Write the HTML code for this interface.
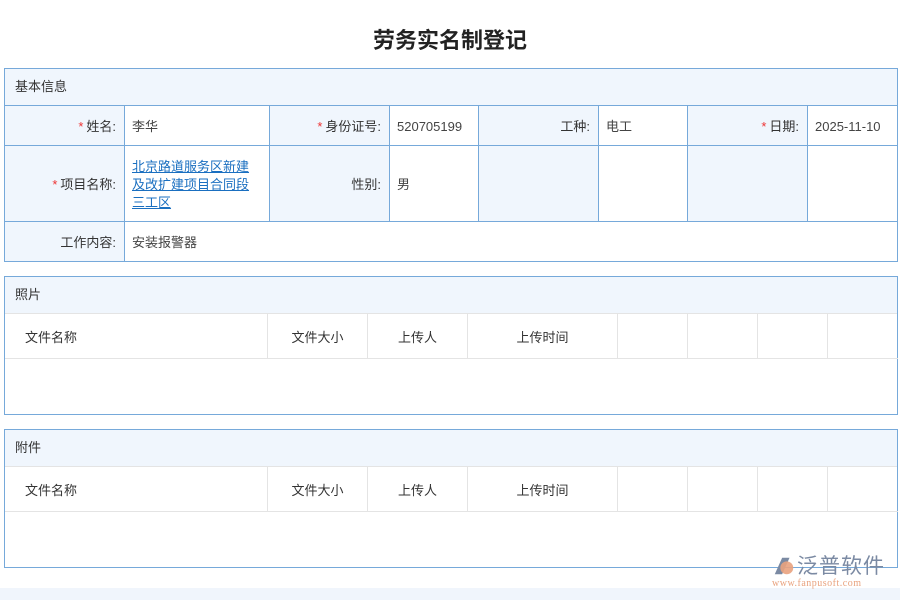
<!DOCTYPE html><html><head><meta charset="utf-8"><style>
*{margin:0;padding:0;box-sizing:border-box}
body{width:900px;height:600px;background:#fff;font-family:"Liberation Sans","Noto Sans CJK SC",sans-serif;font-size:13px;color:#333;position:relative;overflow:hidden}
.a{position:absolute}
h1{position:absolute;top:23px;left:0;width:900px;text-align:center;font-size:22px;font-weight:bold;color:#222;font-family:"Noto Sans CJK SC",sans-serif}
.box{position:absolute;left:4px;width:894px;border:1px solid #76a9da}
.hd{position:absolute;left:0;top:0;width:100%;height:37px;background:#f0f6fd;border-bottom:1px solid #76a9da;padding:9px 10px;line-height:18px}
.hd.g{border-bottom-color:#e4e4e4}
.c{position:absolute;border-right:1px solid #76a9da;border-bottom:1px solid #76a9da;display:flex;align-items:center;line-height:18px;padding-top:2px}
.l{background:#f0f6fd;justify-content:flex-end;padding-right:8px;color:#333}
.v{padding-left:7px;color:#444}
.r{color:#e33;margin-right:3px}
.th{position:absolute;top:37px;height:45px;border-right:1px solid #e4e4e4;border-bottom:1px solid #e4e4e4;display:flex;align-items:center;justify-content:center}
</style></head><body>
<h1>劳务实名制登记</h1>
<div class="box" style="top:68px;height:194px">
<div class="hd">基本信息</div>
<div class="c l" style="left:0;top:37px;width:120px;height:40px"><span class="r">*</span>姓名:</div>
<div class="c v" style="left:120px;top:37px;width:145px;height:40px">李华</div>
<div class="c l" style="left:265px;top:37px;width:120px;height:40px"><span class="r">*</span>身份证号:</div>
<div class="c v" style="left:385px;top:37px;width:89px;height:40px">520705199</div>
<div class="c l" style="left:474px;top:37px;width:120px;height:40px">工种:</div>
<div class="c v" style="left:594px;top:37px;width:89px;height:40px">电工</div>
<div class="c l" style="left:683px;top:37px;width:120px;height:40px"><span class="r">*</span>日期:</div>
<div class="c v" style="left:803px;top:37px;width:90px;height:40px;border-right:none">2025-11-10</div>
<div class="c l" style="left:0;top:77px;width:120px;height:76px"><span class="r">*</span>项目名称:</div>
<div class="c v" style="left:120px;top:77px;width:145px;height:76px;color:#1a6fc0;text-decoration:underline;padding-right:10px">北京路道服务区新建及改扩建项目合同段三工区</div>
<div class="c l" style="left:265px;top:77px;width:120px;height:76px">性别:</div>
<div class="c v" style="left:385px;top:77px;width:89px;height:76px">男</div>
<div class="c l" style="left:474px;top:77px;width:120px;height:76px"></div>
<div class="c v" style="left:594px;top:77px;width:89px;height:76px"></div>
<div class="c l" style="left:683px;top:77px;width:120px;height:76px"></div>
<div class="c v" style="left:803px;top:77px;width:90px;height:76px;border-right:none"></div>
<div class="c l" style="left:0;top:153px;width:120px;height:39px;border-bottom:none">工作内容:</div>
<div class="c v" style="left:120px;top:153px;width:773px;height:39px;border:none">安装报警器</div>
</div>
<div class="box" style="top:276px;height:139px">
<div class="hd g">照片</div>
<div class="th" style="left:0;width:263px;justify-content:flex-start;padding-left:20px">文件名称</div>
<div class="th" style="left:263px;width:100px">文件大小</div>
<div class="th" style="left:363px;width:100px">上传人</div>
<div class="th" style="left:463px;width:150px">上传时间</div>
<div class="th" style="left:613px;width:70px"></div>
<div class="th" style="left:683px;width:70px"></div>
<div class="th" style="left:753px;width:70px"></div>
<div class="th" style="left:823px;width:70px;border-right:none"></div>
</div>
<div class="box" style="top:429px;height:139px">
<div class="hd g">附件</div>
<div class="th" style="left:0;width:263px;justify-content:flex-start;padding-left:20px">文件名称</div>
<div class="th" style="left:263px;width:100px">文件大小</div>
<div class="th" style="left:363px;width:100px">上传人</div>
<div class="th" style="left:463px;width:150px">上传时间</div>
<div class="th" style="left:613px;width:70px"></div>
<div class="th" style="left:683px;width:70px"></div>
<div class="th" style="left:753px;width:70px"></div>
<div class="th" style="left:823px;width:70px;border-right:none"></div>
</div>
<div class="a" style="left:0;top:588px;width:900px;height:12px;background:#f0f5fc"></div>
<svg class="a" style="left:771px;top:554px" width="26" height="24" viewBox="0 0 28 26"><path d="M4 22 L12 4 L20 4 L12 22Z" fill="#7b8aa3"/><circle cx="17" cy="15" r="7" fill="#e9a27e" opacity=".9"/></svg>
<div class="a" style="left:797px;top:552px;font-size:21px;color:#7b8aa3;letter-spacing:1px;font-family:'Noto Sans CJK SC',sans-serif;line-height:26px">泛普软件</div>
<div class="a" style="left:772px;top:578px;font-size:10px;color:#e9a27e;font-family:'Liberation Serif',serif;letter-spacing:.5px">www.fanpusoft.com</div>
</body></html>
